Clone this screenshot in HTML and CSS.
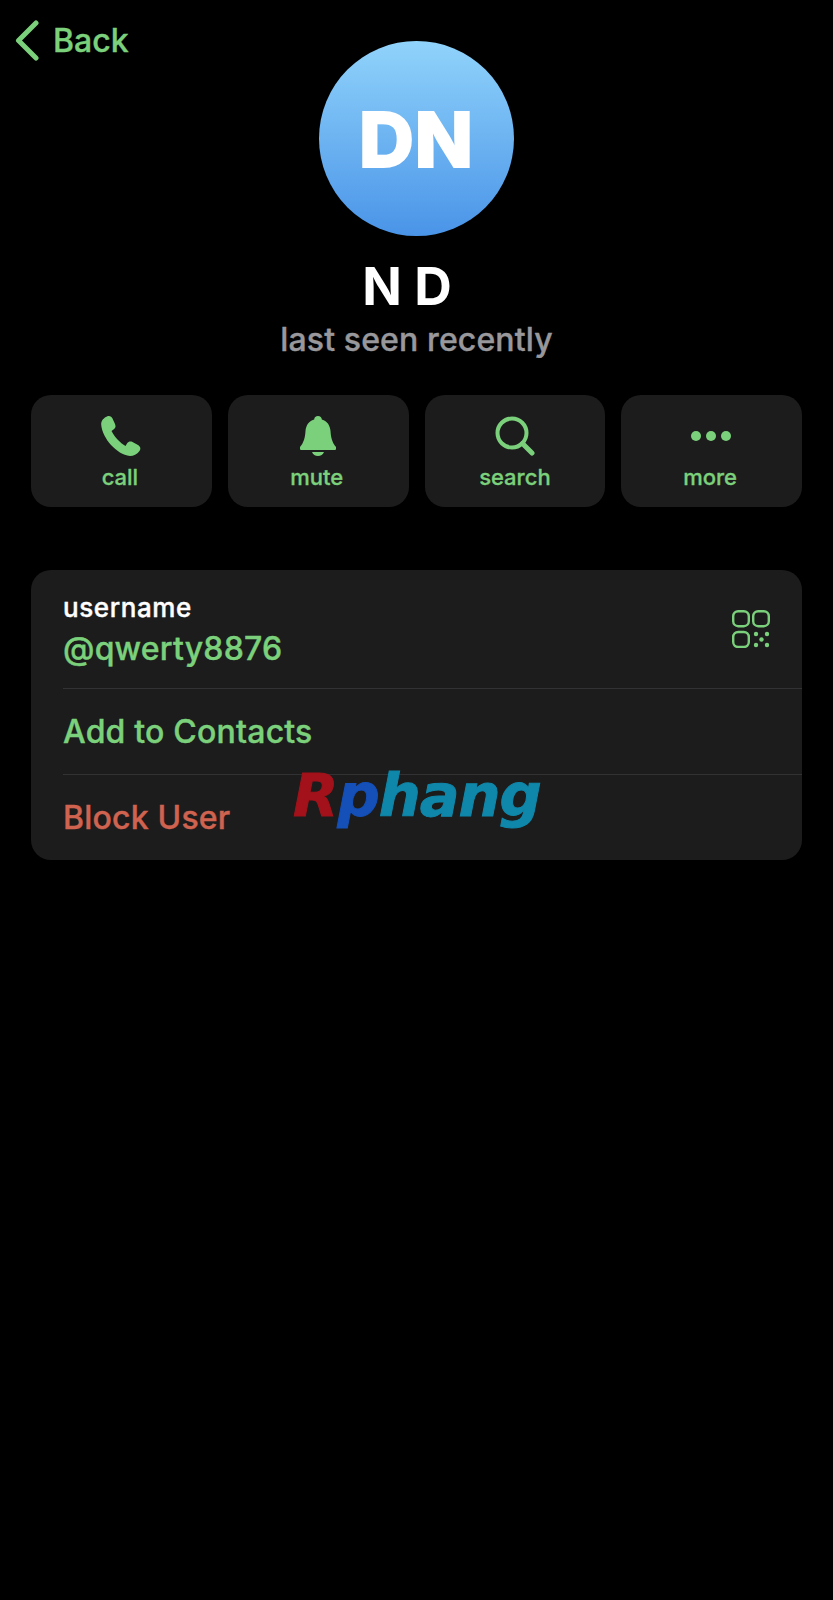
FILE: index.html
```html
<!DOCTYPE html>
<html lang="en">

<head>
    <meta charset="UTF-8">
    <meta name="viewport" content="width=device-width, initial-scale=1.0">
    <title>N D</title>
    <link rel="stylesheet" href="styles.css">
</head>

<body>
    <div class="nav">
        <a class="back">
            <svg class="back-icon" viewBox="0 0 24 41" width="24" height="41">
                <path d="M21 3 L3.5 20.5 L21 38" fill="none" stroke="#7bd17b" stroke-width="5" stroke-linecap="round" stroke-linejoin="round" />
            </svg>
            <span>Back</span>
        </a>
    </div>

    <div class="profile">
        <div class="avatar">DN</div>
        <div class="name">N D</div>
        <div class="status">last seen recently</div>
    </div>

    <div class="actions">
        <div class="action">
            <svg viewBox="0 0 40 40" width="40" height="40">
                <path fill="#7bd17b" d="M6 .5C8.5-.5 10.5.5 11.5 2.5L14 8C15 10.5 14.5 12 12.5 13.5L10.5 15C12 18 14.5 21.5 17 24C19.5 26.5 22 28.5 24.5 30L26 27.5C27.5 25.5 29.5 25 31.5 26L37 29C39.5 30.5 40 33 38.5 35C36 38.5 32.5 40 29 40C22 39.5 15.5 34.5 10 29C5 23.5.5 15 .2 8.5C0 5 2.5 2 6 .5Z" />
            </svg>
            <span class="action-label">call</span>
        </div>
        <div class="action">
            <svg viewBox="0 0 36 40" width="36" height="40">
                <path fill="#7bd17b" d="M18 0C20.2 0 21.8 1.6 21.8 3.4C27.5 5 30 9.5 30.5 15C31 22 32 26 36 31C36.8 32.5 36 34 34 34H2C0 34-.8 32.5 0 31C4 26 5 22 5.5 15C6 9.5 8.5 5 14.2 3.4C14.2 1.6 15.8 0 18 0ZM12 36H24C23 38.5 20.8 40 18 40C15.2 40 13 38.5 12 36Z" />
            </svg>
            <span class="action-label">mute</span>
        </div>
        <div class="action">
            <svg viewBox="0 0 40 40" width="40" height="40">
                <circle cx="17" cy="17" r="14.5" fill="none" stroke="#7bd17b" stroke-width="4" />
                <path d="M27.5 27.5 L37 37" fill="none" stroke="#7bd17b" stroke-width="5" stroke-linecap="round" />
            </svg>
            <span>search</span>
        </div>
        <div class="action">
            <svg class="more-icon" viewBox="0 0 40 40" width="40" height="40">
                <circle cx="5" cy="20" r="5" fill="#7bd17b" />
                <circle cx="20" cy="20" r="5" fill="#7bd17b" />
                <circle cx="35" cy="20" r="5" fill="#7bd17b" />
            </svg>
            <span class="action-label">more</span>
        </div>
    </div>

    <div class="card">
        <div class="row row-user">
            <div class="user-text">
                <div class="label">username</div>
                <div class="handle">@qwerty8876</div>
            </div>
            <svg class="qr" viewBox="0 0 38 38" width="38" height="38">
                <g fill="none" stroke="#7bd17b" stroke-width="2.4">
                    <rect x="1.2" y="1.2" width="15.6" height="15" rx="5" />
                    <rect x="21.2" y="1.2" width="15.6" height="15" rx="5" />
                    <rect x="1.2" y="22" width="15.6" height="15" rx="5" />
                </g>
                <g fill="#7bd17b">
                    <circle cx="24" cy="24" r="2.2" />
                    <circle cx="35" cy="24" r="2.2" />
                    <circle cx="29.5" cy="29.5" r="2.2" />
                    <circle cx="24" cy="35" r="2.2" />
                    <circle cx="35" cy="35" r="2.2" />
                </g>
            </svg>
        </div>
        <div class="row row-link">Add to Contacts</div>
        <div class="row row-danger">Block User</div>
        <div class="watermark"><span class="wm-r">R</span><span class="wm-p">p</span><span class="wm-rest">hang</span></div>
    </div>
</body>

</html>
```

FILE: styles.css
```css
body {
    margin: 0;
    min-height: 1600px;
    background: #000;
    color: #fff;
    font-family: "Inter", "Liberation Sans", sans-serif;
}

.nav {
    height: 41px;
}

.back {
    display: inline-flex;
    align-items: center;
    gap: 14px;
    padding: 20px 0 0 15px;
    color: #7bd17b;
    font-size: 32px;
    font-weight: 500;
    line-height: 41px;
    -webkit-text-stroke: .4px currentColor;
}

.profile {
    display: flex;
    flex-direction: column;
    align-items: center;
}

.avatar {
    width: 195px;
    height: 195px;
    border-radius: 50%;
    background: linear-gradient(#90d3fb, #4a94e8);
    display: flex;
    align-items: center;
    justify-content: center;
    font-size: 76px;
    font-weight: 800;
    letter-spacing: 1px;
    -webkit-text-stroke: 2px #fff;
}

.name {
    margin-top: 20px;
    padding-right: 19px;
    font-size: 52px;
    font-weight: 700;
    line-height: 62px;
}

.status {
    margin-top: 2px;
    color: #98989c;
    font-size: 32px;
    font-weight: 500;
    line-height: 40px;
    letter-spacing: .12px;
    -webkit-text-stroke: .4px currentColor;
}

.actions {
    display: flex;
    gap: 16px;
    margin: 35px 31px 0;
}

.action {
    flex: 1;
    height: 112px;
    box-sizing: border-box;
    padding-top: 21px;
    background: #1c1c1d;
    border-radius: 20px;
    display: flex;
    flex-direction: column;
    align-items: center;
    gap: 7px;
    color: #7bd17b;
    font-size: 22px;
    font-weight: 500;
    line-height: 28px;
    -webkit-text-stroke: .3px currentColor;
}

.action-label {
    padding-right: 3px;
}

.more-icon {
    margin-right: 2px;
}

.card {
    position: relative;
    margin: 63px 31px 0;
    background: #1c1c1d;
    border-radius: 20px;
    overflow: hidden;
}

.row {
    display: flex;
    align-items: center;
    margin-left: 32px;
    font-size: 32px;
    font-weight: 500;
    letter-spacing: .2px;
    -webkit-text-stroke: .4px currentColor;
    border-bottom: 1px solid #323234;
}

.row-user {
    height: 118px;
    justify-content: space-between;
    padding-right: 32px;
}

.user-text {
    padding-top: 4px;
}

.label {
    font-size: 26px;
    line-height: 36px;
    letter-spacing: .6px;
}

.handle {
    color: #7bd17b;
    line-height: 46px;
}

.row-link {
    height: 85px;
    color: #7bd17b;
}

.row-danger {
    height: 85px;
    color: #cf6350;
    border-bottom: 0;
}

.watermark {
    position: absolute;
    left: 262px;
    top: 191px;
    font-family: "DejaVu Sans", sans-serif;
    font-size: 59px;
    font-weight: 700;
    font-style: italic;
    line-height: 70px;
    letter-spacing: -1px;
    -webkit-text-stroke: 1px currentColor;
}

.wm-r {
    color: #a3121a;
}

.wm-p {
    color: #1450b8;
}

.wm-rest {
    color: #0f87aa;
}
```
